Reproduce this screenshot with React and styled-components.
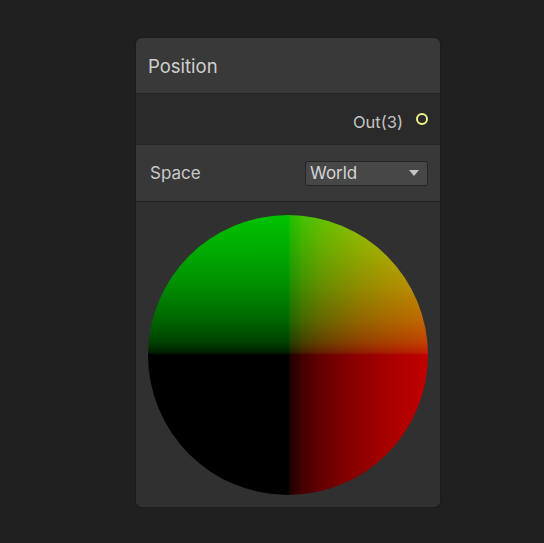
import React from "react";
import styled, { createGlobalStyle } from "styled-components";

const Global = createGlobalStyle`
  html, body { margin: 0; padding: 0; background: #202020; }
  body { font-family: Inter, "Noto Sans", sans-serif; -webkit-font-smoothing: antialiased; }
`;

const Page = styled.div`
  width: 544px;
  height: 543px;
  padding: 38px 0 0 136px;
  box-sizing: border-box;
`;

const Node = styled.div`
  width: 304px;
  display: flex;
  flex-direction: column;
  border-radius: 6px;
  overflow: hidden;
  background: #303030;
  box-shadow: 0 0 0 1px #1c1c1c;
`;

const Header = styled.div`
  height: 55px;
  display: flex;
  align-items: center;
  padding-left: 12px;
  background: #393939;
  border-bottom: 1px solid #232323;
  color: #cfcfcf;
  font-size: 18.5px;
`;

const OutputRow = styled.div`
  height: 50px;
  display: flex;
  align-items: center;
  justify-content: flex-end;
  gap: 13px;
  padding-right: 12px;
  background: #2a2a2a;
  border-bottom: 1px solid #232323;
`;

const PortLabel = styled.span`
  color: #c4c4c4;
  font-size: 16.5px;
  position: relative;
  top: 3px;
`;

const Port = styled.span`
  width: 12px;
  height: 12px;
  box-sizing: border-box;
  border-radius: 50%;
  border: 2px solid ${(p) => p.$color};
  background: #2a2a2a;
`;

const SettingRow = styled.div`
  height: 56px;
  display: flex;
  align-items: center;
  justify-content: space-between;
  padding: 0 12px 0 14px;
  background: #383838;
  border-bottom: 1px solid #232323;
`;

const SettingLabel = styled.span`
  color: #c8c8c8;
  font-size: 17px;
`;

const Dropdown = styled.div`
  width: 123px;
  height: 25px;
  box-sizing: border-box;
  display: flex;
  align-items: center;
  justify-content: space-between;
  padding: 0 8px 0 4px;
  background: #474747;
  border: 1px solid #252525;
  border-radius: 3px;
  color: #d4d4d4;
  font-size: 17px;
`;

const Arrow = styled.span`
  width: 0;
  height: 0;
  border-left: 5.5px solid transparent;
  border-right: 5.5px solid transparent;
  border-top: 6px solid #c4c4c4;
`;

const Preview = styled.div`
  height: 305px;
  display: flex;
  align-items: center;
  justify-content: center;
  background: #303030;
`;

const rampStops = [
  [0, 0], [0.02, 33], [0.1, 68], [0.25, 103], [0.5, 142], [0.75, 171], [1, 194],
];

function Sphere() {
  const d = 280;
  const r = d / 2;
  return (
    <svg width={d} height={d} viewBox={`0 0 ${d} ${d}`}>
      <defs>
        <clipPath id="sphereClip">
          <circle cx={r} cy={r} r={r} />
        </clipPath>
        <linearGradient id="redGrad" x1="0" y1="0" x2="1" y2="0">
          {rampStops.map(([t, v]) => (
            <stop key={t} offset={t} stopColor={`rgb(${v},0,0)`} />
          ))}
        </linearGradient>
        <linearGradient id="greenGrad" x1="0" y1="1" x2="0" y2="0">
          {rampStops.map(([t, v]) => (
            <stop key={t} offset={t} stopColor={`rgb(0,${v},0)`} />
          ))}
        </linearGradient>
      </defs>
      <g clipPath="url(#sphereClip)">
        <rect x="0" y="0" width={d} height={d} fill="#000" />
        <rect x={r} y="0" width={r} height={d} fill="url(#redGrad)" />
        <rect
          x="0"
          y="0"
          width={d}
          height={r}
          fill="url(#greenGrad)"
          style={{ mixBlendMode: "screen" }}
        />
      </g>
    </svg>
  );
}

export default function App() {
  return (
    <>
      <Global />
      <Page>
        <Node>
          <Header>Position</Header>
          <OutputRow>
            <PortLabel>Out(3)</PortLabel>
            <Port $color="#f2f28a" />
          </OutputRow>
          <SettingRow>
            <SettingLabel>Space</SettingLabel>
            <Dropdown>
              <span>World</span>
              <Arrow />
            </Dropdown>
          </SettingRow>
          <Preview>
            <Sphere />
          </Preview>
        </Node>
      </Page>
    </>
  );
}
